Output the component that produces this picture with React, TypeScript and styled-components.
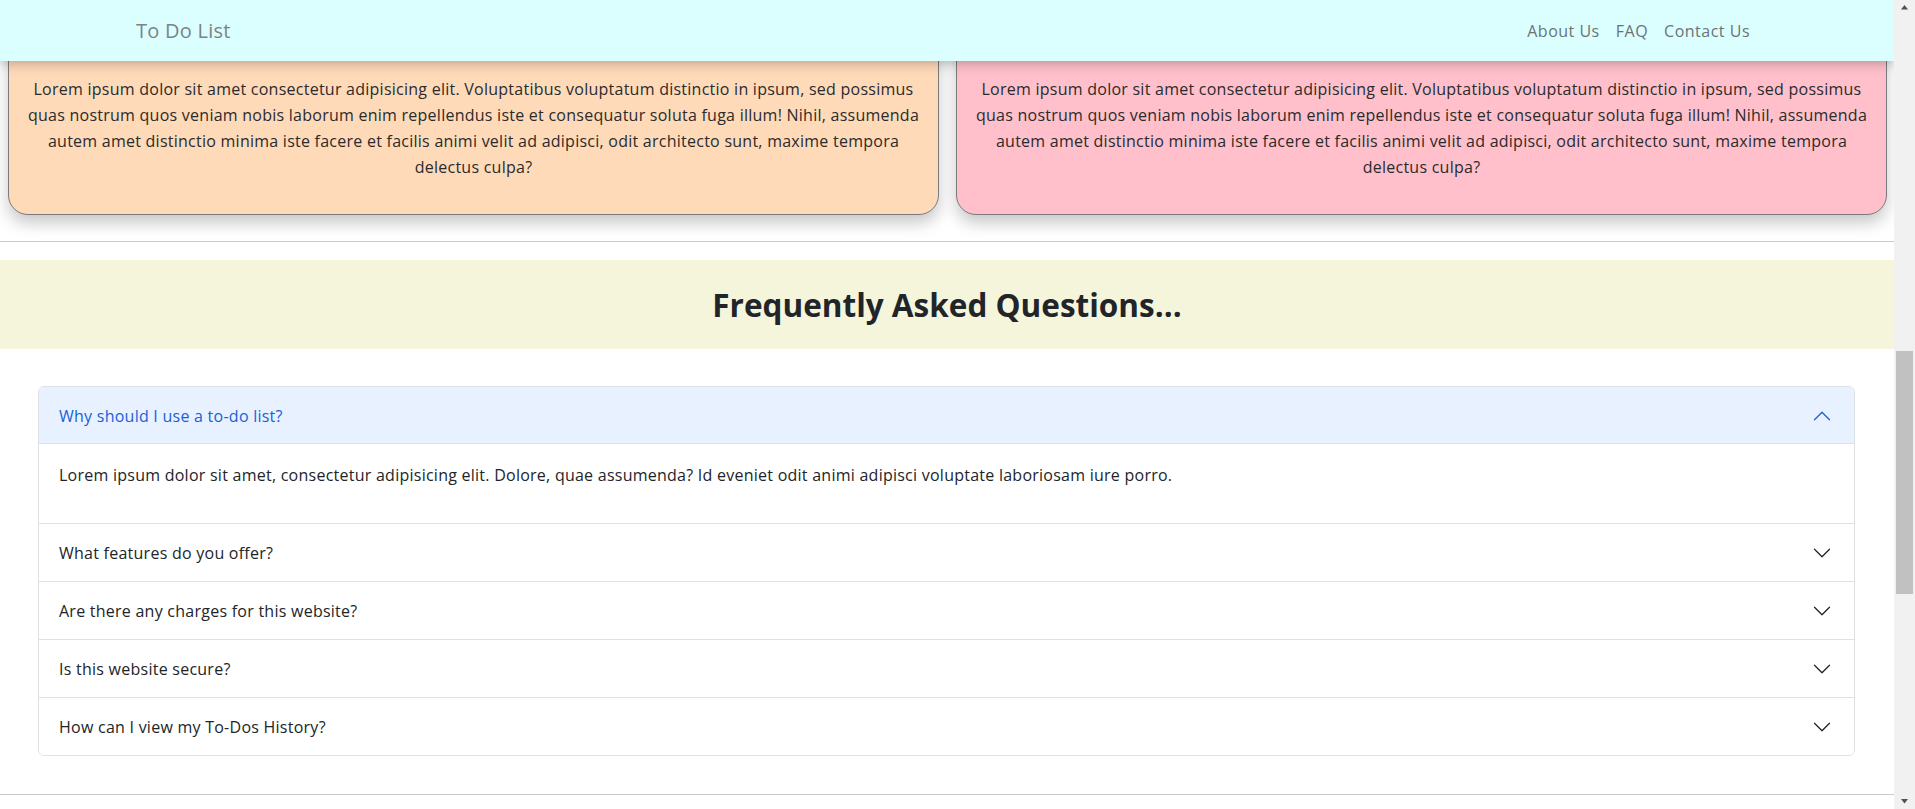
import React from "react";
import styled, { createGlobalStyle } from "styled-components";

const FONT = `"Segoe UI", "Open Sans", "Liberation Sans", Arial, sans-serif`;

const GlobalStyle = createGlobalStyle`
  html, body { margin: 0; padding: 0; overflow: hidden; }
  body { font-family: ${FONT}; color: #212529; background: #fff; letter-spacing: 0.25px; }
  * { box-sizing: border-box; }
`;

const Frame = styled.div`
  display: flex;
  width: 1915px;
  height: 809px;
`;

const Viewport = styled.div`
  position: relative;
  flex: 1;
  height: 100%;
  overflow: hidden;
  background: #fff;
`;

const Navbar = styled.nav`
  position: absolute;
  top: 0;
  left: 0;
  right: 0;
  z-index: 10;
  height: 61px;
  padding: 0 136px;
  display: flex;
  align-items: center;
  justify-content: space-between;
  background: #dbfeff;
  box-shadow: 0 2px 12px rgba(0, 0, 0, 0.28);
`;

const Brand = styled.a`
  font-size: 20px;
  line-height: 30px;
  color: #7b8484;
  text-decoration: none;
`;

const NavLinks = styled.div`
  display: flex;
`;

const NavLink = styled.a`
  font-size: 16px;
  line-height: 24px;
  padding: 0 8px;
  letter-spacing: 0.5px;
  color: #6b7474;
  text-decoration: none;
`;

const CardRow = styled.section`
  display: grid;
  grid-template-columns: 1fr 1fr;
  gap: 17px;
  padding: 0 7px 0 8px;
`;

const Card = styled.div<{ $bg: string }>`
  background: ${(p) => p.$bg};
  border: 1px solid #7a7a7a;
  border-radius: 20px;
  padding: 75px 12px 18px;
  box-shadow: 0 8px 16px rgba(0, 0, 0, 0.22);
`;

const CardText = styled.p`
  margin: 0 0 16px;
  font-size: 16px;
  line-height: 26px;
  text-align: center;
  color: #2b2b2b;
`;

const Divider = styled.hr<{ $top: number }>`
  margin: ${(p) => p.$top}px 0 0;
  border: 0;
  border-top: 1px solid #c9cacb;
`;

const FaqBand = styled.div`
  margin-top: 18px;
  height: 89px;
  background: #f5f5dc;
  display: flex;
  align-items: center;
  justify-content: center;
`;

const FaqTitle = styled.h2`
  margin: 0;
  font-size: 31.5px;
  line-height: 40px;
  font-weight: 700;
  letter-spacing: 0;
  color: #212529;
`;

const Accordion = styled.div`
  margin: 37px 39px 0 38px;
  border: 1px solid #dee2e6;
  border-radius: 6px;
  overflow: hidden;
`;

const Item = styled.div`
  & + & { border-top: 1px solid #dee2e6; }
`;

const Header = styled.button<{ $open?: boolean }>`
  width: 100%;
  height: 57px;
  padding: 0 22px 0 20px;
  display: flex;
  align-items: center;
  justify-content: space-between;
  border: 0;
  font-family: ${FONT};
  font-size: 16px;
  line-height: 24px;
  letter-spacing: 0.25px;
  text-align: left;
  cursor: pointer;
  background: ${(p) => (p.$open ? "#e7f1ff" : "#fff")};
  color: ${(p) => (p.$open ? "#1a5fd6" : "#212529")};
  box-shadow: ${(p) => (p.$open ? "inset 0 -1px 0 #dee2e6" : "none")};
`;

const Chevron = styled.svg<{ $open?: boolean }>`
  width: 20px;
  height: 20px;
  flex-shrink: 0;
  transform: ${(p) => (p.$open ? "rotate(180deg)" : "none")};
  fill: ${(p) => (p.$open ? "#1a5fd6" : "#212529")};
`;

const Body = styled.div`
  padding: 18px 20px 0;
`;

const BodyText = styled.p`
  margin: 0 0 35px;
  font-size: 16px;
  line-height: 26px;
`;

const Track = styled.div`
  width: 21px;
  height: 100%;
  background: #f1f1f1;
  display: flex;
  flex-direction: column;
  align-items: center;
`;

const Arrow = styled.svg`
  width: 21px;
  height: 17px;
  flex-shrink: 0;
  fill: #505050;
`;

const Thumb = styled.div`
  width: 17px;
  height: 243px;
  margin-top: 334px;
  background: #c1c1c1;
`;

const Spacer = styled.div`
  flex: 1;
`;

const cardText =
  "Lorem ipsum dolor sit amet consectetur adipisicing elit. Voluptatibus voluptatum distinctio in ipsum, sed possimus quas nostrum quos veniam nobis laborum enim repellendus iste et consequatur soluta fuga illum! Nihil, assumenda autem amet distinctio minima iste facere et facilis animi velit ad adipisci, odit architecto sunt, maxime tempora delectus culpa?";

const faqs = [
  {
    q: "Why should I use a to-do list?",
    a: "Lorem ipsum dolor sit amet, consectetur adipisicing elit. Dolore, quae assumenda? Id eveniet odit animi adipisci voluptate laboriosam iure porro.",
    open: true,
  },
  { q: "What features do you offer?" },
  { q: "Are there any charges for this website?" },
  { q: "Is this website secure?" },
  { q: "How can I view my To-Dos History?" },
];

const ChevronIcon = ({ open }: { open?: boolean }) => (
  <Chevron $open={open} viewBox="0 0 16 16">
    <path
      fillRule="evenodd"
      d="M1.646 4.646a.5.5 0 0 1 .708 0L8 10.293l5.646-5.647a.5.5 0 0 1 .708.708l-6 6a.5.5 0 0 1-.708 0l-6-6a.5.5 0 0 1 0-.708z"
    />
  </Chevron>
);

export default function App() {
  return (
    <>
      <GlobalStyle />
      <Frame>
        <Viewport>
          <Navbar>
            <Brand href="#">To Do List</Brand>
            <NavLinks>
              <NavLink href="#">About Us</NavLink>
              <NavLink href="#">FAQ</NavLink>
              <NavLink href="#">Contact Us</NavLink>
            </NavLinks>
          </Navbar>

          <CardRow>
            <Card $bg="#ffdab9">
              <CardText>{cardText}</CardText>
            </Card>
            <Card $bg="#ffc0cb">
              <CardText>{cardText}</CardText>
            </Card>
          </CardRow>

          <Divider $top={26} />

          <FaqBand>
            <FaqTitle>Frequently Asked Questions...</FaqTitle>
          </FaqBand>

          <Accordion>
            {faqs.map((f) => (
              <Item key={f.q}>
                <Header $open={f.open}>
                  <span>{f.q}</span>
                  <ChevronIcon open={f.open} />
                </Header>
                {f.open && (
                  <Body>
                    <BodyText>{f.a}</BodyText>
                  </Body>
                )}
              </Item>
            ))}
          </Accordion>

          <Divider $top={38} />
        </Viewport>

        <Track>
          <Arrow viewBox="0 0 21 17">
            <path d="M10.5 5 L14 9.5 L7 9.5 Z" />
          </Arrow>
          <Thumb />
          <Spacer />
          <Arrow viewBox="0 0 21 17">
            <path d="M7 7 L14 7 L10.5 11.5 Z" />
          </Arrow>
        </Track>
      </Frame>
    </>
  );
}
